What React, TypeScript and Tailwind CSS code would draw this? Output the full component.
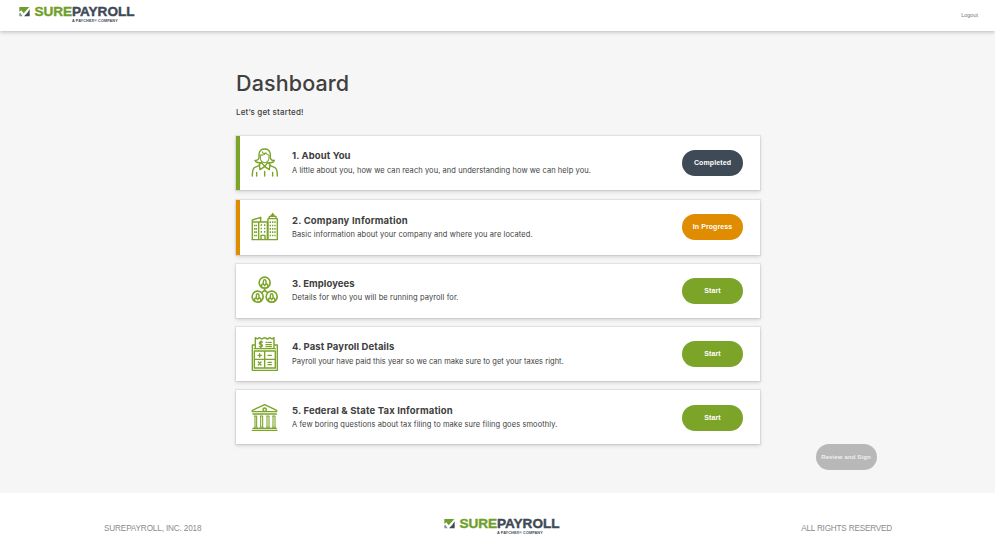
import type { ReactNode } from "react";

const GREEN = "#7ba428";

function Logo() {
  return (
    <div className="flex h-[20px] w-[116px] items-start gap-[4.500px] font-['Liberation_Sans',sans-serif]">
      <svg className="mt-[2px] h-[10px] w-[11px] shrink-0" viewBox="0 0 33 30">
        <path d="M1 0H31L14 19L7 10L1 15Z" fill="#6f9f2a" />
        <path d="M1 19L4 17L11 28H1Z" fill="#8a949c" />
        <path d="M32 7V28H15Q25 20 32 7Z" fill="#3e4a56" />
      </svg>
      <div className="flex w-[100px] flex-col">
        <div className="text-[13.600px] leading-[14px] font-bold tracking-[-0.050px] whitespace-nowrap text-[#3e4a56] [-webkit-text-stroke:0.4px]">
          <span className="text-[#6f9f2a]">SURE</span>PAYROLL
        </div>
        <div className="pl-[37.500px] text-[3.800px] leading-[5px] font-bold tracking-[0.080px] whitespace-nowrap text-[#3e4a56]">
          A PAYCHEX® COMPANY
        </div>
      </div>
    </div>
  );
}

function Icon({ children }: { children: ReactNode }) {
  return (
    <svg
      className="h-[36px] w-[30px] shrink-0"
      viewBox="60 42 90 108"
      fill="none"
      stroke={GREEN}
      strokeWidth="4.200"
      strokeLinejoin="round"
      strokeLinecap="round"
    >
      {children}
    </svg>
  );
}

const PersonIcon = () => (
  <Icon>
    <path d="M92 98Q78 100 75 91Q84 93 87 84V72Q89 57 104 57Q119 57 121 72V84Q124 93 133 91Q130 100 117 98" />
    <path d="M91 75Q103 77 108 69Q112 75 117 76V84Q116 97 104 98Q92 97 91 84ZM97 65Q98 73 107 69" strokeWidth="3.200" />
    <path d="M95 98L88 103L90 119L104 110L118 119L120 103L113 98M95 98L104 110L113 98" />
    <path d="M87 107L73 113Q67 117 67 138M121 107L135 113Q142 117 142 138M80 127V138M128 127V138M104 124V138" />
  </Icon>
);

const BuildingIcon = () => (
  <Icon>
    <path d="M67 136V78L92 70V82M67 84H88M66 137H142M86 136V84H112V136M114 136V74H142V137M118 73V67H138V73M124 67V63H132V67M128 62V58" />
    <path d="M93 136V124H105V136" />
    <path d="M74 92V130M79 92V130M94 91V118M104 91V118M121 82V130M128 82V130M135 82V130" strokeDasharray="5 5" strokeLinecap="butt" />
  </Icon>
);

const Member = ({ x, y }: { x: number; y: number }) => (
  <g>
    <circle cx={x} cy={y} r="16.500" strokeWidth="5" />
    <path d={`M${x - 9} ${y + 12}V${y + 6}L${x - 4} ${y + 3}V${y - 2}Q${x - 4} ${y - 9} ${x} ${y - 9}Q${x + 4} ${y - 9} ${x + 4} ${y - 2}V${y + 3}L${x + 9} ${y + 6}V${y + 12}M${x - 4} ${y + 4}L${x} ${y + 9}L${x + 4} ${y + 4}`} />
  </g>
);

const EmployeesIcon = () => (
  <Icon>
    <Member x={104} y={74} />
    <Member x={83} y={116} />
    <Member x={125} y={116} />
    <path d="M104 91V97M104 97L96 103M104 97L112 103" strokeWidth="5" />
  </Icon>
);

const PayrollIcon = () => (
  <Icon>
    <path d="M76 78V47L82 51L88 47L95 51L104 47L112 51L120 47L126 51L132 47V78M76 69H67V145H142V69H132M73 80H136" />
    <path d="M73 87H136V138H73ZM104 87V138M73 112H136" />
    <path d="M97 60H91Q88 60 88 63.500Q88 67 93 67Q97 67 97 71Q97 74 93 74H88M93 57V77M108 61H111M115 61H124M108 68H124M108 74H111M115 74H124" />
    <path d="M84 100H94M89 95V105M114 100H124M85 120L93 129M93 120L85 129M114 121H124M114 128H124" />
  </Icon>
);

const BankIcon = () => (
  <Icon>
    <path d="M67 80V76L104 59L140 76V80ZM67 136H141M69 130H139M69 87H139" />
    <circle cx="104" cy="74" r="5" />
    <path d="M73 93H80M75 94V126M80 94V126M73 127H82M91 93H98M92 94V126M98 94V126M90 127H100M110 93H117M111 94V126M117 94V126M109 127H119M128 93H135M129 94V126M135 94V126M127 127H137" strokeWidth="3.200" />
  </Icon>
);

type Step = {
  title: string;
  text: string;
  action: string;
  icon: ReactNode;
  card: string;
  body: string;
  titleClass: string;
  textClass: string;
  button: string;
};

const steps: Step[] = [
  {
    title: "1. About You",
    text: "A little about you, how we can reach you, and understanding how we can help you.",
    action: "Completed",
    icon: <PersonIcon />,
    card: "h-[54px] border-l-4 border-l-[#7ba428] pl-[10px] pt-[8px] mb-[9.500px]",
    body: "pt-[5px]",
    titleClass: "tracking-[0.1px]",
    textClass: "tracking-[0.070px] mt-[2px]",
    button: "bg-[#3e4a56] mt-[5.500px]",
  },
  {
    title: "2. Company Information",
    text: "Basic information about your company and where you are located.",
    action: "In Progress",
    icon: <BuildingIcon />,
    card: "h-[55px] border-l-4 border-l-[#e08c00] pl-[10px] pt-[8.500px] mb-[9px]",
    body: "pt-[6px]",
    titleClass: "tracking-[0.180px]",
    textClass: "tracking-[0.088px] mt-[1px]",
    button: "bg-[#e08c00] mt-[5.500px]",
  },
  {
    title: "3. Employees",
    text: "Details for who you will be running payroll for.",
    action: "Start",
    icon: <EmployeesIcon />,
    card: "h-[54px] pl-[14px] pt-[8.500px] mb-[9.500px]",
    body: "pt-[5px]",
    titleClass: "tracking-[0.060px]",
    textClass: "tracking-[0.1px] mt-[1px]",
    button: "bg-[#7ba428] mt-[5.500px]",
  },
  {
    title: "4. Past Payroll Details",
    text: "Payroll your have paid this year so we can make sure to get your taxes right.",
    action: "Start",
    icon: <PayrollIcon />,
    card: "h-[54px] pl-[14px] pt-[9px] mb-[8.500px]",
    body: "pt-[3.500px]",
    titleClass: "tracking-[0.110px]",
    textClass: "tracking-[0.026px] mt-[2px]",
    button: "bg-[#7ba428] mt-[5px]",
  },
  {
    title: "5. Federal & State Tax Information",
    text: "A few boring questions about tax filing to make sure filing goes smoothly.",
    action: "Start",
    icon: <BankIcon />,
    card: "h-[54.500px] pl-[14px] pt-[9.500px]",
    body: "pt-[5px]",
    titleClass: "tracking-[0.150px]",
    textClass: "tracking-[0.080px] mt-[1px]",
    button: "bg-[#7ba428] mt-[5.500px]",
  },
];

export default function App() {
  return (
    <div className="flex h-[557px] w-[995px] flex-col overflow-hidden bg-[#f6f6f6] font-['Inter',sans-serif] text-[#404040]">
      <header className="flex h-[31px] shrink-0 items-start justify-between bg-white pt-[5px] pr-[17px] pl-[19px] shadow-[0_1px_4px_rgba(0,0,0,0.25)]">
        <Logo />
        <a className="mt-[6px] font-['Liberation_Sans',sans-serif] text-[5.500px] leading-[8px] text-[#777]">Logout</a>
      </header>

      <main className="flex h-[462px] shrink-0 flex-col">
        <div className="ml-[236px] w-[524px] pt-[38px]">
          <h1 className="h-[28px] text-[21.500px] leading-[28px] font-medium tracking-[0.120px] whitespace-nowrap">Dashboard</h1>
          <p className="mt-[10px] h-[10px] text-[8px] leading-[10px] font-medium tracking-[0.200px] whitespace-nowrap">Let’s get started!</p>
          <div className="mt-[19px] flex flex-col">
            {steps.map((s) => (
              <section
                key={s.title}
                className={`flex items-start bg-white pr-[17px] shadow-[0_0_1px_1px_rgba(0,0,0,0.07),0_2px_4px_rgba(0,0,0,0.13)] ${s.card}`}
              >
                {s.icon}
                <div className={`ml-[12px] flex grow flex-col items-start ${s.body}`}>
                  <h2 className={`text-[9.500px] leading-[14px] font-bold whitespace-nowrap ${s.titleClass}`}>{s.title}</h2>
                  <p className={`text-[7.500px] leading-[11px] whitespace-nowrap ${s.textClass}`}>{s.text}</p>
                </div>
                <button
                  className={`h-[26px] w-[61px] shrink-0 rounded-full font-['Liberation_Sans',sans-serif] text-[7px] leading-[26px] font-bold tracking-[0.1px] text-white ${s.button}`}
                >
                  {s.action}
                </button>
              </section>
            ))}
          </div>
        </div>
        <button className="ml-[815.500px] h-[26px] w-[61px] shrink-0 rounded-full bg-[#b8b8b8] font-['Liberation_Sans',sans-serif] text-[6px] leading-[26px] font-bold tracking-[0.130px] whitespace-nowrap text-[#efefef]">
          Review and Sign
        </button>
      </main>

      <footer className="flex h-[64px] shrink-0 items-start justify-between bg-white pr-[103px] pl-[104px] pt-[24px] font-['Liberation_Sans',sans-serif] text-[8.200px] text-[#8c8c8c]">
        <div className="w-[158px] pt-[6px] leading-[12px] tracking-[-0.150px] whitespace-nowrap">SUREPAYROLL, INC. 2018</div>
        <Logo />
        <div className="w-[150px] pt-[6px] text-right leading-[12px] tracking-[-0.200px] whitespace-nowrap">ALL RIGHTS RESERVED</div>
      </footer>
    </div>
  );
}
